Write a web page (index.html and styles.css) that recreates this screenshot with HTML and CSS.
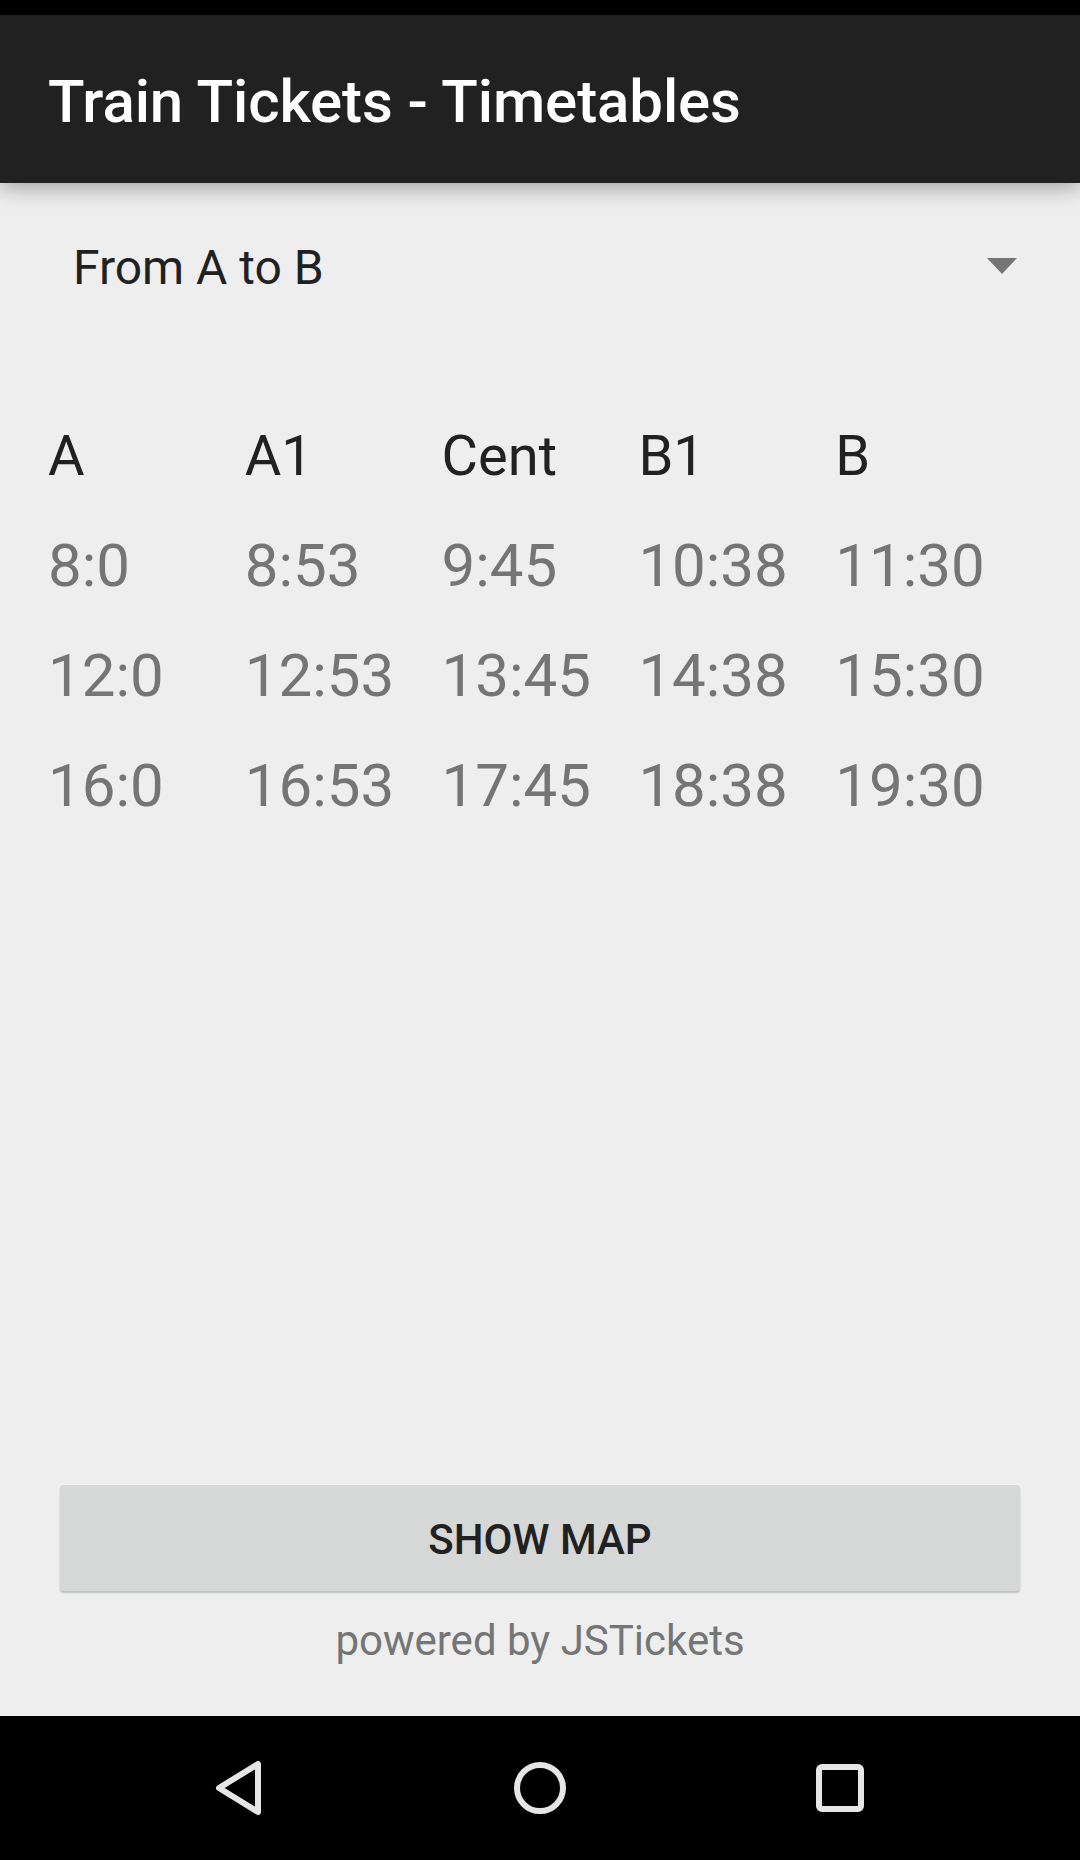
FILE: index.html
```html
<!DOCTYPE html>
<html>
<head>
<meta charset="utf-8">
<link rel="stylesheet" href="styles.css">
</head>
<body>
<div class="screen">
  <div class="status-bar"></div>
  <header class="app-bar">
    <h1 class="app-title">Train Tickets - Timetables</h1>
  </header>
  <div class="spinner">
    <span class="spinner-text">From A to B</span>
    <span class="spinner-arrow"></span>
  </div>
  <div class="timetable">
    <div class="tt-row tt-head">
      <span>A</span><span>A1</span><span>Cent</span><span>B1</span><span>B</span>
    </div>
    <div class="tt-row tt-time">
      <span>8:0</span><span>8:53</span><span>9:45</span><span>10:38</span><span>11:30</span>
    </div>
    <div class="tt-row tt-time">
      <span>12:0</span><span>12:53</span><span>13:45</span><span>14:38</span><span>15:30</span>
    </div>
    <div class="tt-row tt-time">
      <span>16:0</span><span>16:53</span><span>17:45</span><span>18:38</span><span>19:30</span>
    </div>
  </div>
  <div class="spacer"></div>
  <div class="footer">
    <button class="map-btn">SHOW MAP</button>
    <div class="powered">powered by JSTickets</div>
  </div>
  <nav class="nav-bar">
    <div class="nav-cell">
      <svg width="56" height="56" viewBox="0 0 56 56"><path d="M46 4 L46 52 L7 28 Z" fill="none" stroke="#e6e6e6" stroke-width="6" stroke-linejoin="round"/></svg>
    </div>
    <div class="nav-cell">
      <svg width="56" height="56" viewBox="0 0 56 56"><circle cx="28" cy="28" r="23" fill="none" stroke="#e6e6e6" stroke-width="6"/></svg>
    </div>
    <div class="nav-cell">
      <svg width="48" height="48" viewBox="0 0 48 48"><rect x="3" y="3" width="42" height="42" rx="3" fill="none" stroke="#e6e6e6" stroke-width="6"/></svg>
    </div>
  </nav>
</div>
</body>
</html>
```
FILE: styles.css
```css
* { box-sizing: border-box; }
html, body { margin: 0; padding: 0; }
body {
  width: 1080px;
  height: 1860px;
  background: #eeeeee;
  font-family: Roboto, "Liberation Sans", sans-serif;
  overflow: hidden;
}
.screen {
  display: flex;
  flex-direction: column;
  height: 1860px;
}
.status-bar {
  height: 15px;
  background: #000;
  flex: none;
}
.app-bar {
  height: 168px;
  flex: none;
  background: #212121;
  display: flex;
  align-items: center;
  padding-left: 48px;
  padding-top: 6px;
  box-shadow: 0 6px 20px rgba(0, 0, 0, 0.3);
  position: relative;
  z-index: 2;
}
.app-title {
  margin: 0;
  color: #ffffff;
  font-size: 60px;
  font-weight: 500;
  line-height: 60px;
  letter-spacing: -0.1px;
}
.spinner {
  height: 170px;
  flex: none;
  display: flex;
  align-items: center;
  justify-content: space-between;
  padding: 0 63px 0 73px;
}
.spinner-text {
  font-size: 48px;
  line-height: 48px;
  color: #212121;
}
.spinner-arrow {
  width: 0;
  height: 0;
  border-left: 15px solid transparent;
  border-right: 15px solid transparent;
  border-top: 16px solid #757575;
  margin-top: -4px;
}
.timetable {
  margin-top: 48px;
  padding: 0 48px;
  flex: none;
}
.tt-row {
  display: grid;
  grid-template-columns: repeat(5, 1fr);
  height: 110px;
  align-items: center;
}
.tt-row span {
  line-height: 110px;
}
.tt-head span {
  font-size: 56px;
  color: #212121;
}
.tt-time span {
  font-size: 60px;
  color: #757575;
}
.spacer { flex: 1; }
.footer {
  flex: none;
  display: flex;
  flex-direction: column;
  align-items: center;
  padding: 0 60px 45px;
}
.map-btn {
  width: 100%;
  height: 106px;
  border: none;
  border-radius: 4px;
  background: #d6d7d7;
  box-shadow: 0 2px 2px rgba(0, 0, 0, 0.2);
  font-family: Roboto, "Liberation Sans", sans-serif;
  font-size: 42px;
  font-weight: 500;
  color: #212121;
  padding: 2px 0 0;
}
.powered {
  margin-top: 20px;
  font-size: 42px;
  line-height: 60px;
  color: #757575;
}
.nav-bar {
  height: 144px;
  flex: none;
  background: #000;
  display: flex;
  padding: 0 90px;
}
.nav-cell {
  flex: 1;
  display: flex;
  align-items: center;
  justify-content: center;
}
```
